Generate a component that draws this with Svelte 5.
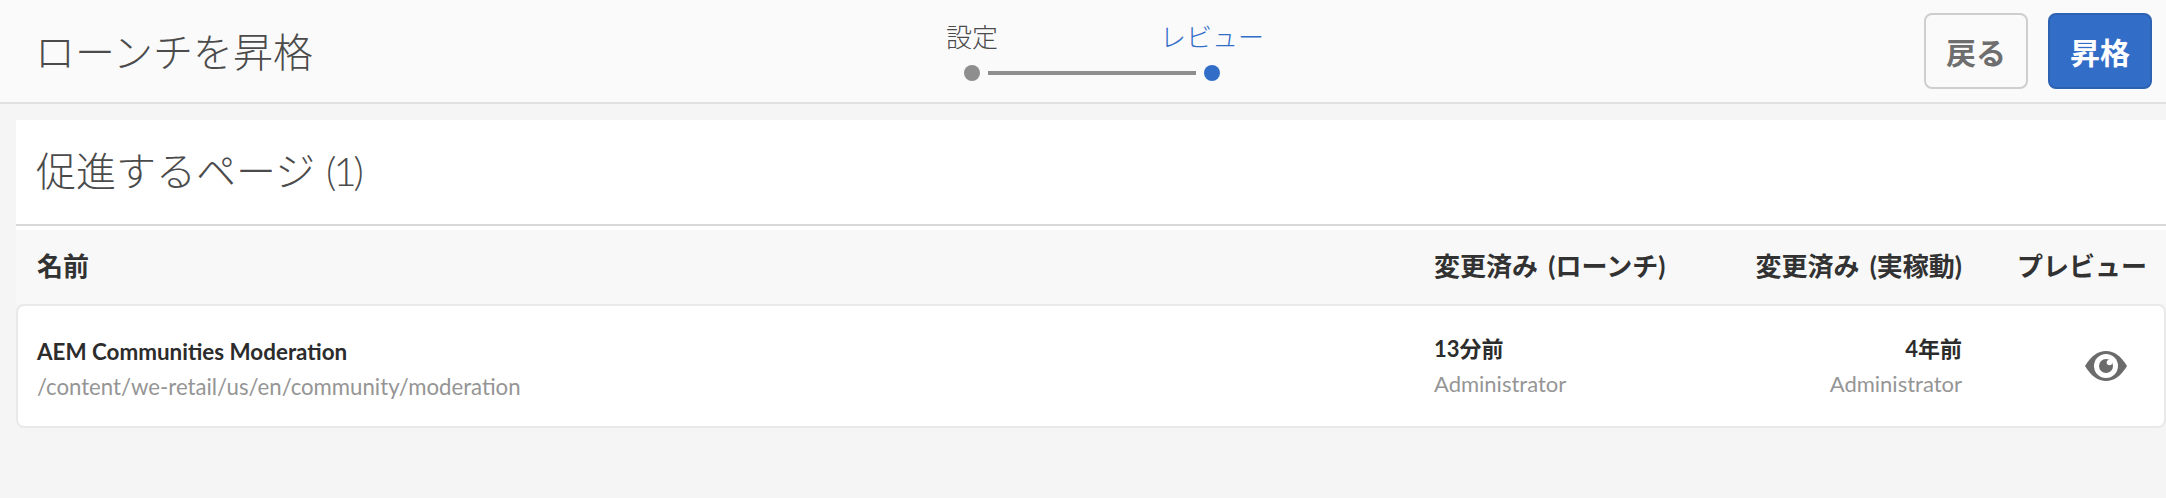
<script>
	let pages = [
		{
			title: "AEM Communities Moderation",
			path: "/content/we-retail/us/en/community/moderation",
			launch: "13分前",
			live: "4年前",
			user: "Administrator",
		},
	];
</script>

<header class="bar">
	<h1>ローンチを昇格</h1>
	<div class="stepper">
		<div class="labels">
			<span>設定</span>
			<span class="current">レビュー</span>
		</div>
		<div class="track">
			<i class="dot"></i>
			<i class="line"></i>
			<i class="dot current"></i>
		</div>
	</div>
	<div class="actions">
		<button class="back">戻る</button>
		<button class="primary">昇格</button>
	</div>
</header>

<main>
	<h2>促進するページ <span class="count">(1)</span></h2>
	<div class="head grid">
		<div>名前</div>
		<div>変更済み (ローンチ)</div>
		<div class="right">変更済み (実稼動)</div>
		<div class="right">プレビュー</div>
	</div>
	{#each pages as p}
		<div class="row grid">
			<div class="name">
				<div class="strong">{p.title}</div>
				<div class="sub path">{p.path}</div>
			</div>
			<div>
				<div class="strong">{p.launch}</div>
				<div class="sub">{p.user}</div>
			</div>
			<div class="right">
				<div class="strong">{p.live}</div>
				<div class="sub">{p.user}</div>
			</div>
			<div class="right preview">
				<svg width="42" height="30" viewBox="0 0 42 30">
					<path d="M0 15C6 5 13 0 21 0s15 5 21 15c-6 10-13 15-21 15S6 25 0 15z" fill="#6b6b6b" />
					<circle cx="21" cy="15" r="12" fill="#fff" />
					<circle cx="21" cy="15" r="7" fill="#6b6b6b" />
					<circle cx="24.5" cy="11.5" r="2.8" fill="#fff" />
				</svg>
			</div>
		</div>
	{/each}
</main>

<style>
	:global(body) {
		background: #f5f5f5;
		font-family: Lato, "Noto Sans CJK JP", sans-serif;
		color: #2c2c2c;
	}

	.bar {
		display: grid;
		grid-template-columns: 877px 360px 1fr;
		align-items: center;
		height: 102px;
		padding: 0 14px 0 35px;
		background: #fafafa;
		border-bottom: 2px solid #e1e1e1;
	}

	h1,
	h2 {
		margin: 0;
		font-size: 40px;
		font-weight: 300;
		color: #4b4b4b;
	}

	h1 {
		margin-top: -2px;
	}

	.stepper {
		align-self: start;
		padding-top: 23px;
	}

	.labels {
		display: flex;
		gap: 120px;
		font-size: 26px;
		font-weight: 300;
		line-height: 28px;
		color: #4b4b4b;
	}

	.labels span {
		width: 120px;
		text-align: center;
	}

	.labels .current {
		color: #326ec8;
	}

	.track {
		display: flex;
		align-items: center;
		gap: 8px;
		margin-top: 14px;
		padding-left: 52px;
	}

	.dot {
		width: 16px;
		height: 16px;
		border-radius: 50%;
		background: #8e8e8e;
	}

	.dot.current {
		background: #326ec8;
	}

	.line {
		width: 208px;
		height: 4px;
		background: #8e8e8e;
	}

	.actions {
		display: flex;
		justify-content: flex-end;
		gap: 20px;
	}

	button {
		width: 104px;
		height: 76px;
		padding: 0;
		border-radius: 8px;
		border: 2px solid #cecece;
		background: transparent;
		font-family: inherit;
		font-size: 30px;
		font-weight: 700;
		color: #6e6e6e;
	}

	button.primary {
		background: #326ec8;
		border-color: #2d62b3;
		color: #fff;
	}

	main {
		padding: 16px 0 0 16px;
	}

	h2 {
		height: 104px;
		line-height: 102px;
		padding-left: 20px;
		background: #fff;
		border-bottom: 2px solid #d8d8d8;
	}

	.count {
		letter-spacing: -3px;
	}

	.grid {
		display: grid;
		grid-template-columns: 1397px 280px 248px 1fr;
		align-items: center;
	}

	.right {
		text-align: right;
	}

	.head {
		height: 68px;
		padding: 0 0 6px 21px;
		border-top: 4px solid #fff;
		background: #f8f8f8;
		font-size: 26px;
		font-weight: 700;
		word-spacing: 4px;
		color: #323232;
	}

	.head > div:last-child {
		padding-right: 19px;
	}

	.row {
		height: 120px;
		padding-left: 19px;
		border: 2px solid #e9e9e9;
		border-radius: 8px;
		background: #fff;
	}

	.strong {
		font-size: 22px;
		font-weight: 700;
		line-height: 28px;
		color: #2c2c2c;
	}

	.sub {
		margin-top: 7px;
		font-size: 22px;
		line-height: 28px;
		color: #959595;
	}

	.name {
		padding-top: 6px;
	}

	.name .strong {
		font-size: 22.4px;
	}

	.path {
		font-size: 22.2px;
	}

	.preview {
		padding-right: 37px;
		line-height: 0;
	}
</style>
